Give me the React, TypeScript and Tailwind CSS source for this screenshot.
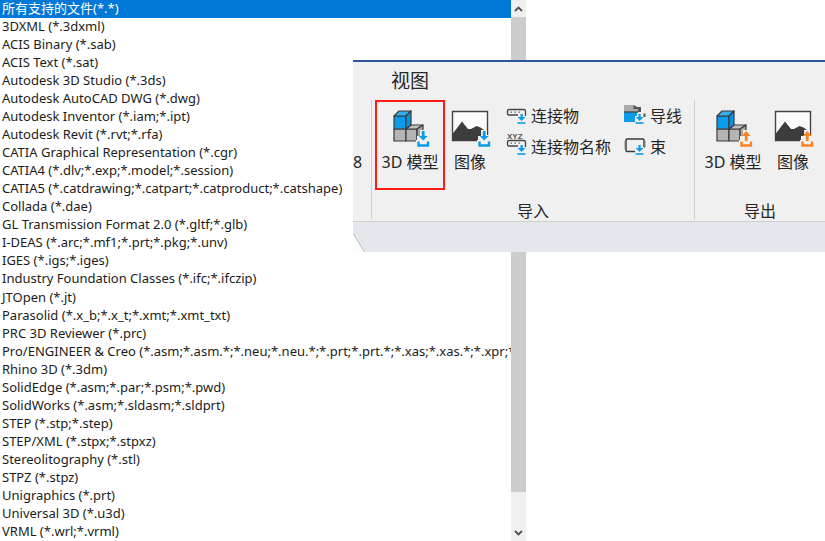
import React, { useState } from "react";
import clsx from "clsx";

const formats = [
  "所有支持的文件(*.*)",
  "3DXML (*.3dxml)",
  "ACIS Binary (*.sab)",
  "ACIS Text (*.sat)",
  "Autodesk 3D Studio (*.3ds)",
  "Autodesk AutoCAD DWG (*.dwg)",
  "Autodesk Inventor (*.iam;*.ipt)",
  "Autodesk Revit (*.rvt;*.rfa)",
  "CATIA Graphical Representation (*.cgr)",
  "CATIA4 (*.dlv;*.exp;*.model;*.session)",
  "CATIA5 (*.catdrawing;*.catpart;*.catproduct;*.catshape)",
  "Collada (*.dae)",
  "GL Transmission Format 2.0 (*.gltf;*.glb)",
  "I-DEAS (*.arc;*.mf1;*.prt;*.pkg;*.unv)",
  "IGES (*.igs;*.iges)",
  "Industry Foundation Classes (*.ifc;*.ifczip)",
  "JTOpen (*.jt)",
  "Parasolid (*.x_b;*.x_t;*.xmt;*.xmt_txt)",
  "PRC 3D Reviewer (*.prc)",
  "Pro/ENGINEER & Creo (*.asm;*.asm.*;*.neu;*.neu.*;*.prt;*.prt.*;*.xas;*.xas.*;*.xpr;*.xpr",
  "Rhino 3D (*.3dm)",
  "SolidEdge (*.asm;*.par;*.psm;*.pwd)",
  "SolidWorks (*.asm;*.sldasm;*.sldprt)",
  "STEP (*.stp;*.step)",
  "STEP/XML (*.stpx;*.stpxz)",
  "Stereolitography (*.stl)",
  "STPZ (*.stpz)",
  "Unigraphics (*.prt)",
  "Universal 3D (*.u3d)",
  "VRML (*.wrl;*.vrml)",
];

type Direction = "import" | "export";

/* Arrow and tray in the lower right corner of the large icons */
function TransferBadge({ direction, x }: { direction: Direction; x: number }) {
  const shape =
    direction === "import"
      ? "M4.800 0h2.800v5h3l-4.400 4.500l-4.400 -4.500h3z"
      : "M4.800 10h2.800v-5h3l-4.400 -5l-4.400 5h3z";
  const color = direction === "import" ? "#0a9bea" : "#fb8320";
  return (
    <g transform={`translate(${x} 21)`}>
      <path d="M3 -1h6v5h4v12h-14v-7h1v-4h3z" fill="#f0f0f0" />
      <path d={shape} fill={color} />
      <path d="M1.500 10.500v4h9.500v-4" fill="none" stroke={color} strokeWidth="2.400" />
    </g>
  );
}

function ModelIcon({ direction }: { direction: Direction }) {
  return (
    <svg width="42" height="38" viewBox="-4 0 42 38" aria-hidden="true">
      <g stroke="#3a3a3a" strokeWidth="1.2" strokeLinejoin="round">
        <path d="M1 19h12v12h-12z" fill="#b5b5b5" />
        <path d="M13 19h11v12h-11z" fill="#b5b5b5" />
        <path d="M13 19l5 -4h12l-6 4z" fill="#c0c0c0" />
        <path d="M24 19l6 -4v11l-6 5z" fill="#a4a4a4" />
        <path d="M1 6h12v13h-12z" fill="#0a9bea" />
        <path d="M1 6l5 -5h12l-5 5z" fill="#35aeef" />
        <path d="M13 6l5 -5v14l-5 4z" fill="#0a93dc" />
      </g>
      <TransferBadge direction={direction} x={24} />
    </svg>
  );
}

function ImageIcon({ direction }: { direction: Direction }) {
  return (
    <svg width="42" height="38" viewBox="-2 0 42 38" aria-hidden="true">
      <path d="M1.500 1.500h35v29h-35z" fill="#fafafa" stroke="#444" strokeWidth="1.400" />
      <path
        d="M1.500 31v-7l9.500 -12.500l6 7.500h3l5.500 -3l4 1.500l7 5v8.500z"
        fill="#3d3d3d"
      />
      <TransferBadge direction={direction} x={27} />
    </svg>
  );
}

/* Small arrow over a line, shared by the compact icons */
function SmallArrow({ x }: { x: number }) {
  return (
    <g transform={`translate(${x} 8)`}>
      <path d="M2 -1h5v3h2v8h-9v-8h2z" fill="#f0f0f0" />
      <path d="M3.500 0h2.200v3h2.800l-3.900 4l-3.900 -4h2.800z" fill="#0a9bea" />
      <path d="M.5 9h8" stroke="#0a9bea" strokeWidth="1.600" />
    </g>
  );
}

function ConnectorIcon({ named = false }: { named?: boolean }) {
  return (
    <svg width="20" height="20" viewBox="0 0 20 20" aria-hidden="true" className="overflow-visible">
      {named && (
        <text
          x="0"
          y="2"
          fontSize="8"
          fontWeight="700"
          fill="#555"
          fontFamily="Liberation Sans, sans-serif"
        >
          XYZ
        </text>
      )}
      <path
        d="M11 9h-8.500q-2 0 -2 -1.500v-2.500q0 -1.500 2 -1.500h14q2 0 2 1.500v5"
        fill="none"
        stroke="#444"
        strokeWidth="1.300"
      />
      <path d="M3.500 6.200h12" stroke="#666" strokeWidth="1.300" strokeDasharray="1.500 2.500" />
      <SmallArrow x={10} />
    </svg>
  );
}

function WireIcon() {
  return (
    <svg width="22" height="20" viewBox="0 0 22 20" aria-hidden="true" className="overflow-visible">
      <path d="M0 -1h10l3 2h4v5h-17z" fill="#aaa" />
      <path d="M9.500 -1l3.500 2h4v5h-3v-3h-4.500z" fill="#555" />
      <path d="M0 6h14v10h-14z" fill="#0a9bea" />
      <path d="M0 6h14" stroke="#444" strokeWidth="1.300" />
      <SmallArrow x={11} />
      <path d="M20.500 7.500v3.500" stroke="#555" strokeWidth="2" />
    </svg>
  );
}

function BundleIcon() {
  return (
    <svg width="22" height="20" viewBox="0 0 22 20" aria-hidden="true">
      <path
        d="M12 14.500h-9q-1 0 -1 -1v-10.500q0 -1 1 -1h16q1 0 1 1v8"
        fill="none"
        stroke="#3a3a3a"
        strokeWidth="1.500"
      />
      <path d="M1 4v8" stroke="#888" />
      <path d="M21 4v6" stroke="#888" />
      <SmallArrow x={11} />
    </svg>
  );
}

interface LargeButtonProps {
  label: string;
  icon: React.ReactNode;
  highlighted?: boolean;
}

function LargeButton({ label, icon, highlighted }: LargeButtonProps) {
  return (
    <button
      className={clsx(
        "flex h-[90px] flex-col items-center gap-1 border-2 pt-2 whitespace-nowrap",
        highlighted ? "w-[70px] border-[#ff1a1a]" : "w-[50px] border-transparent",
      )}
    >
      {icon}
      <span className="leading-5">{label}</span>
    </button>
  );
}

function SmallButton({ label, icon }: { label: string; icon: React.ReactNode }) {
  return (
    <button className="flex h-[31px] items-center gap-1 whitespace-nowrap">
      {icon}
      <span className="leading-5">{label}</span>
    </button>
  );
}

function FormatList() {
  const [selected, setSelected] = useState(0);

  return (
    <div className="flex h-screen w-[526px]">
      <ul className="flex min-w-0 flex-1 flex-col overflow-hidden font-['Noto_Sans','Noto_Sans_CJK_SC',sans-serif] text-[13px]">
        {formats.map((format, i) => (
          <li key={format} className="flex min-h-4 flex-1">
            <button
              onClick={() => setSelected(i)}
              className={clsx(
                "flex w-full items-center overflow-hidden pb-[2px] pl-[2px] text-left leading-4 whitespace-nowrap",
                selected === i ? "bg-[#0078d7] text-white" : "text-[#1c1c1c]",
              )}
            >
              {format}
            </button>
          </li>
        ))}
      </ul>

      {/* Scrollbar */}
      <div className="flex w-[15px] flex-col bg-[#f0f0f0]">
        <button aria-label="Scroll up" className="flex h-[17px] items-center justify-center">
          <svg width="9" height="6" viewBox="0 0 9 6" aria-hidden="true">
            <path d="M1 5l3.500 -3.500l3.500 3.500" fill="none" stroke="#505050" strokeWidth="1.800" />
          </svg>
        </button>
        <div className="grow bg-[#cdcdcd]" />
        <div className="h-8" />
        <button aria-label="Scroll down" className="flex h-[17px] items-center justify-center">
          <svg width="9" height="6" viewBox="0 0 9 6" aria-hidden="true">
            <path d="M1 1l3.500 3.500l3.500 -3.500" fill="none" stroke="#505050" strokeWidth="1.800" />
          </svg>
        </button>
      </div>
    </div>
  );
}

function Ribbon() {
  return (
    <div className="absolute top-[60px] right-0 left-[353px] overflow-hidden border-t-2 border-[#2b579a] bg-[#f0f0f0] font-['Noto_Sans','Noto_Sans_CJK_SC',sans-serif] text-base text-[#262626]">
      <div className="flex h-[38px] items-center pl-[38px]">
        <button className="text-[19px] leading-6">视图</button>
      </div>

      <div className="flex h-[122px] border-b border-[#cfcfcf]">
        <div className="flex w-[18px] items-start pt-[52px]">
          <span className="leading-5">8</span>
        </div>

        {/* Import group */}
        <section className="mb-[2px] flex w-[323px] shrink-0 flex-col border-l border-[#d0d0d0]">
          <div className="flex grow items-start pl-[3px]">
            <LargeButton label="3D 模型" icon={<ModelIcon direction="import" />} highlighted />
            <LargeButton label="图像" icon={<ImageIcon direction="import" />} />
            <div className="flex flex-col items-start pl-3">
              <SmallButton label="连接物" icon={<ConnectorIcon />} />
              <SmallButton label="连接物名称" icon={<ConnectorIcon named />} />
            </div>
            <div className="flex flex-col items-start pl-[13px]">
              <SmallButton label="导线" icon={<WireIcon />} />
              <SmallButton label="束" icon={<BundleIcon />} />
            </div>
          </div>
          <h2 className="text-center leading-4">导入</h2>
        </section>

        {/* Export group */}
        <section className="mb-[2px] flex grow flex-col border-l border-[#d0d0d0]">
          <div className="flex grow items-start pl-[3px]">
            <div className="flex w-[70px] justify-center">
              <LargeButton label="3D 模型" icon={<ModelIcon direction="export" />} />
            </div>
            <LargeButton label="图像" icon={<ImageIcon direction="export" />} />
          </div>
          <h2 className="text-center leading-4">导出</h2>
        </section>
      </div>

      <div className="flex h-[30px] items-end bg-[#e4e7ec]">
        <svg width="12" height="20" viewBox="0 0 12 20" aria-hidden="true">
          <path d="M0 0l12 20h-12z" fill="#fcfcfc" />
          <path d="M0 1l11.500 19" stroke="#b4b8bf" />
        </svg>
      </div>
    </div>
  );
}

export default function App() {
  return (
    <main className="relative min-h-screen overflow-hidden bg-white">
      <FormatList />
      <Ribbon />
    </main>
  );
}
